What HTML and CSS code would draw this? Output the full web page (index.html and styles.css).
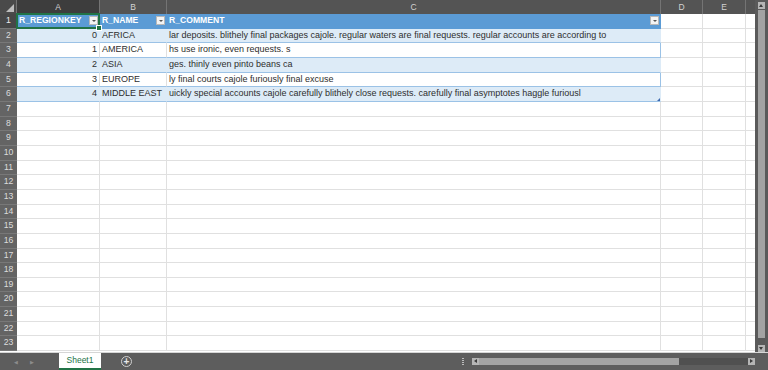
FILE: index.html
```html
<!DOCTYPE html>
<html lang="en">
<head>
    <meta charset="UTF-8">
    <title>Sheet1</title>
    <link rel="stylesheet" href="styles.css">
</head>
<body>
<div class="app">
    <div class="main">
        <div class="grid">
            <div class="row colhead">
                <div class="corner"></div>
                <div class="ch sel">A</div>
                <div class="ch">B</div>
                <div class="ch">C</div>
                <div class="ch">D</div>
                <div class="ch">E</div>
                <div class="ch last"></div>
            </div>

            <div class="row thead">
                <div class="rh sel">1</div>
                <div class="c hd active"><span class="txt">R_REGIONKEY</span><span class="filter"></span></div>
                <div class="c hd"><span class="txt">R_NAME</span><span class="filter"></span></div>
                <div class="c hd tend"><span class="txt">R_COMMENT</span><span class="filter"></span></div>
                <div class="c"></div>
                <div class="c"></div>
                <div class="c last"></div>
            </div>
            <div class="row band">
                <div class="rh">2</div>
                <div class="c num">0</div>
                <div class="c">AFRICA</div>
                <div class="c tend">lar deposits. blithely final packages cajole. regular waters are final requests. regular accounts are according to</div>
                <div class="c"></div>
                <div class="c"></div>
                <div class="c last"></div>
            </div>
            <div class="row plain">
                <div class="rh">3</div>
                <div class="c num">1</div>
                <div class="c">AMERICA</div>
                <div class="c tend">hs use ironic, even requests. s</div>
                <div class="c"></div>
                <div class="c"></div>
                <div class="c last"></div>
            </div>
            <div class="row band">
                <div class="rh">4</div>
                <div class="c num">2</div>
                <div class="c">ASIA</div>
                <div class="c tend">ges. thinly even pinto beans ca</div>
                <div class="c"></div>
                <div class="c"></div>
                <div class="c last"></div>
            </div>
            <div class="row plain">
                <div class="rh">5</div>
                <div class="c num">3</div>
                <div class="c">EUROPE</div>
                <div class="c tend">ly final courts cajole furiously final excuse</div>
                <div class="c"></div>
                <div class="c"></div>
                <div class="c last"></div>
            </div>
            <div class="row band lastrow">
                <div class="rh">6</div>
                <div class="c num">4</div>
                <div class="c">MIDDLE EAST</div>
                <div class="c tend resize">uickly special accounts cajole carefully blithely close requests. carefully final asymptotes haggle furiousl</div>
                <div class="c"></div>
                <div class="c"></div>
                <div class="c last"></div>
            </div>

            <div class="row"><div class="rh">7</div><div class="c"></div><div class="c"></div><div class="c"></div><div class="c"></div><div class="c"></div><div class="c last"></div></div>
            <div class="row"><div class="rh">8</div><div class="c"></div><div class="c"></div><div class="c"></div><div class="c"></div><div class="c"></div><div class="c last"></div></div>
            <div class="row"><div class="rh">9</div><div class="c"></div><div class="c"></div><div class="c"></div><div class="c"></div><div class="c"></div><div class="c last"></div></div>
            <div class="row"><div class="rh">10</div><div class="c"></div><div class="c"></div><div class="c"></div><div class="c"></div><div class="c"></div><div class="c last"></div></div>
            <div class="row"><div class="rh">11</div><div class="c"></div><div class="c"></div><div class="c"></div><div class="c"></div><div class="c"></div><div class="c last"></div></div>
            <div class="row"><div class="rh">12</div><div class="c"></div><div class="c"></div><div class="c"></div><div class="c"></div><div class="c"></div><div class="c last"></div></div>
            <div class="row"><div class="rh">13</div><div class="c"></div><div class="c"></div><div class="c"></div><div class="c"></div><div class="c"></div><div class="c last"></div></div>
            <div class="row"><div class="rh">14</div><div class="c"></div><div class="c"></div><div class="c"></div><div class="c"></div><div class="c"></div><div class="c last"></div></div>
            <div class="row"><div class="rh">15</div><div class="c"></div><div class="c"></div><div class="c"></div><div class="c"></div><div class="c"></div><div class="c last"></div></div>
            <div class="row"><div class="rh">16</div><div class="c"></div><div class="c"></div><div class="c"></div><div class="c"></div><div class="c"></div><div class="c last"></div></div>
            <div class="row"><div class="rh">17</div><div class="c"></div><div class="c"></div><div class="c"></div><div class="c"></div><div class="c"></div><div class="c last"></div></div>
            <div class="row"><div class="rh">18</div><div class="c"></div><div class="c"></div><div class="c"></div><div class="c"></div><div class="c"></div><div class="c last"></div></div>
            <div class="row"><div class="rh">19</div><div class="c"></div><div class="c"></div><div class="c"></div><div class="c"></div><div class="c"></div><div class="c last"></div></div>
            <div class="row"><div class="rh">20</div><div class="c"></div><div class="c"></div><div class="c"></div><div class="c"></div><div class="c"></div><div class="c last"></div></div>
            <div class="row"><div class="rh">21</div><div class="c"></div><div class="c"></div><div class="c"></div><div class="c"></div><div class="c"></div><div class="c last"></div></div>
            <div class="row"><div class="rh">22</div><div class="c"></div><div class="c"></div><div class="c"></div><div class="c"></div><div class="c"></div><div class="c last"></div></div>
            <div class="row"><div class="rh">23</div><div class="c"></div><div class="c"></div><div class="c"></div><div class="c"></div><div class="c"></div><div class="c last"></div></div>
        </div>

        <div class="vscroll">
            <span class="sbtn up"></span>
            <span class="vthumb"></span>
            <span class="sbtn down"></span>
        </div>
    </div>

    <div class="tabbar">
        <span class="nav">&#9664;</span>
        <span class="nav">&#9654;</span>
        <span class="tab">Sheet1</span>
        <span class="addsheet">+</span>
        <span class="spacer"></span>
        <span class="split"></span>
        <div class="hscroll">
            <span class="sbtn left"></span>
            <span class="hthumb"></span>
            <span class="htrack"></span>
            <span class="sbtn right"></span>
        </div>
    </div>
</div>
</body>
</html>
```

FILE: styles.css
```css
body {
    margin: 0;
    padding: 0;
    background: #5d5d5d;
    font-family: "Liberation Sans", Arial, sans-serif;
    font-size: 9px;
    color: #2e2e2e;
    overflow: hidden;
}
.app {
    width: 768px;
    height: 370px;
    display: flex;
    flex-direction: column;
}
.main {
    display: flex;
    height: 352px;
    overflow: hidden;
    background: #fff;
}
.grid {
    flex: 1;
    overflow: hidden;
}
.row {
    display: grid;
    grid-template-columns: 17px 83px 67px 494px 42px 43px 1fr;
    height: 14.67px;
}
.row > div {
    box-sizing: border-box;
    border-right: 1px solid #e0e0e0;
    border-bottom: 1px solid #e0e0e0;
    white-space: nowrap;
    overflow: hidden;
    line-height: 13.5px;
}

/* column letters */
.colhead {
    height: 14px;
    background: #545454;
}
.row.colhead > div {
    border-right: 1px solid #747474;
    border-bottom: none;
    color: #d2d2d2;
    text-align: center;
    line-height: 14px;
    font-size: 8.5px;
}
.corner {
    position: relative;
    background: #4a4a4a;
}
.corner::after {
    content: "";
    position: absolute;
    right: 2px;
    bottom: 2px;
    border-left: 8px solid transparent;
    border-bottom: 8px solid #bdbdbd;
}
.ch.sel {
    background: #3d3d3d;
    color: #e6e6e6;
}
.row.colhead > .ch.last {
    border-right: none;
}

/* row numbers */
.row > .rh {
    background: #646464;
    color: #dcdcdc;
    border-right: none;
    border-bottom: 1px solid #787878;
    text-align: center;
    font-size: 8.7px;
}
.row > .rh.sel {
    background: #474747;
    color: #ececec;
}

.c {
    padding: 0 2px;
}
.num {
    text-align: right;
}

/* table */
.thead > .hd {
    background: #5b9bd5;
    color: #fff;
    font-weight: bold;
    font-size: 8.6px;
    display: flex;
    align-items: center;
    border-right-color: #5b9bd5;
    border-bottom-color: #5b9bd5;
}
.hd .txt {
    flex: 1;
    overflow: hidden;
}
.filter {
    position: relative;
    width: 9px;
    height: 9px;
    box-sizing: border-box;
    background: #f4f4f4;
    border: 1px solid #b8b8b8;
    margin-right: -1px;
}
.filter::after {
    content: "";
    position: absolute;
    left: 2px;
    top: 3px;
    border-left: 2px solid transparent;
    border-right: 2px solid transparent;
    border-top: 2px solid #555;
}
.band > .c:nth-child(-n+4) {
    background: #ddebf7;
    border-bottom-color: #9bc2e6;
    border-right-color: #ddebf7;
}
.plain > .c:nth-child(-n+4) {
    border-bottom-color: #9bc2e6;
}
.row > .tend {
    border-right-color: #9bc2e6;
}
.thead > .hd.tend {
    border-right-color: #5b9bd5;
}
.row > .c.last {
    border-right: none;
}

.active {
    position: relative;
    overflow: visible !important;
}
.active::after {
    content: "";
    position: absolute;
    left: -1px;
    top: -1px;
    right: -1px;
    bottom: -1px;
    border: 2px solid #217346;
}
.active::before {
    content: "";
    position: absolute;
    right: -3px;
    bottom: -3px;
    width: 4px;
    height: 4px;
    background: #217346;
    border: 1px solid #fff;
    z-index: 2;
}
.resize {
    position: relative;
}
.resize::after {
    content: "";
    position: absolute;
    right: 0;
    bottom: 0;
    border-left: 3px solid transparent;
    border-bottom: 3px solid #3f6ab0;
}

/* vertical scrollbar */
.vscroll {
    width: 13px;
    background: #5a5a5a;
    display: flex;
    flex-direction: column;
    align-items: center;
    padding: 2px 0 0;
    box-sizing: border-box;
}
.vthumb {
    width: 7px;
    height: 328px;
    margin: 1px 0 7px;
    background: #a3a3a3;
}
.sbtn {
    position: relative;
    width: 7px;
    height: 7px;
    background: #b5b5b5;
}
.sbtn::after {
    content: "";
    position: absolute;
    left: 1px;
    top: 2px;
    border-left: 2.5px solid transparent;
    border-right: 2.5px solid transparent;
}
.sbtn.up::after {
    border-bottom: 3px solid #3a3a3a;
}
.sbtn.down::after {
    border-top: 3px solid #3a3a3a;
}
.sbtn.left::after,
.sbtn.right::after {
    left: 2px;
    top: 1px;
    border: 2.5px solid transparent;
    border-right: none;
    border-left: 3px solid #3a3a3a;
}
.sbtn.left::after {
    border-left: none;
    border-right: 3px solid #3a3a3a;
}

/* sheet tabs */
.tabbar {
    flex: 1;
    display: flex;
    align-items: center;
    background: #5d5d5d;
    border-top: 1px solid #d6d6d6;
}
.nav {
    color: #8c8c8c;
    font-size: 5px;
    margin-left: 14px;
    width: 3px;
}
.nav + .nav {
    margin-left: 13px;
}
.tab {
    align-self: stretch;
    margin-left: 26px;
    width: 42px;
    box-sizing: border-box;
    background: #fff;
    color: #217346;
    text-align: center;
    line-height: 15px;
    font-size: 8.5px;
    border-bottom: 2px solid #217346;
}
.addsheet {
    margin-left: 20px;
    width: 9px;
    height: 9px;
    border: 1px solid #d0d0d0;
    border-radius: 50%;
    color: #e8e8e8;
    font-size: 10px;
    line-height: 9px;
    text-align: center;
    font-weight: bold;
}
.spacer {
    flex: 1;
}
.split {
    width: 2px;
    height: 7px;
    margin-right: 8px;
    background: repeating-linear-gradient(#bcbcbc 0 1px, transparent 1px 2px);
}
.hscroll {
    width: 283px;
    margin-right: 13px;
    display: flex;
    align-items: center;
}
.hthumb {
    width: 200px;
    height: 7px;
    background: #a3a3a3;
}
.htrack {
    flex: 1;
    height: 7px;
    background: #505050;
}
```
